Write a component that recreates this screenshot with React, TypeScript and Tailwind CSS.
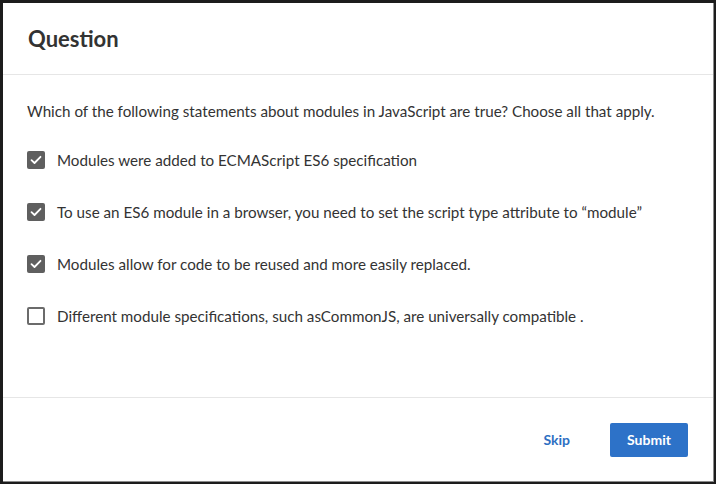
const options = [
  { label: 'Modules were added to ECMAScript ES6 specification', checked: true },
  { label: 'To use an ES6 module in a browser, you need to set the script type attribute to “module”', checked: true },
  { label: 'Modules allow for code to be reused and more easily replaced.', checked: true },
  { label: 'Different module specifications, such asCommonJS, are universally compatible .', checked: false },
]

function Checkbox({ checked }: { checked: boolean }) {
  if (checked) {
    return (
      <span className="w-[18px] h-[18px] rounded-[2px] bg-[#5f5f5f] flex items-center justify-center shrink-0">
        <svg width="12" height="10" viewBox="0 0 12 10" fill="none">
          <path d="M1.5 5.2 4.5 8 10.5 1.8" stroke="#fff" strokeWidth="1.8" strokeLinecap="round" strokeLinejoin="round" />
        </svg>
      </span>
    )
  }
  return <span className="w-[18px] h-[18px] rounded-[2px] border-2 border-[#6b6b6b] bg-white shrink-0" />
}

export default function App() {
  return (
    <div className="w-[716px] h-[484px] bg-[#1c1c1c] pl-[3px] pt-[3px] pr-[2px] pb-[2px] font-['Lato',sans-serif]">
      <div className="w-[711px] h-[479px] bg-white border border-[#8a8a8a] border-t-0 border-l-0 flex flex-col">
        <div className="h-[72px] flex items-center px-[25px] border-b border-[#e6e6e6]">
          <h1 className="text-[22px] font-bold text-[#333]">Question</h1>
        </div>
        <div className="flex-1 px-[24px] pt-[26px]">
          <p className="text-[15.2px] text-[#333] leading-[20px]">
            Which of the following statements about modules in JavaScript are true? Choose all that apply.
          </p>
          <div className="mt-[29px] flex flex-col gap-[32px]">
            {options.map((o) => (
              <label key={o.label} className="flex items-center gap-[12px] h-[20px]">
                <Checkbox checked={o.checked} />
                <span className="text-[15.2px] text-[#333]">{o.label}</span>
              </label>
            ))}
          </div>
        </div>
        <div className="h-[84px] border-t border-[#e6e6e6] flex items-center justify-end pr-[25px] gap-[40px]">
          <button className="text-[14px] font-bold text-[#2d6fc2]">Skip</button>
          <button className="w-[78px] h-[34px] bg-[#2d72c8] rounded-[2px] text-[14px] font-bold text-white">Submit</button>
        </div>
      </div>
    </div>
  )
}
